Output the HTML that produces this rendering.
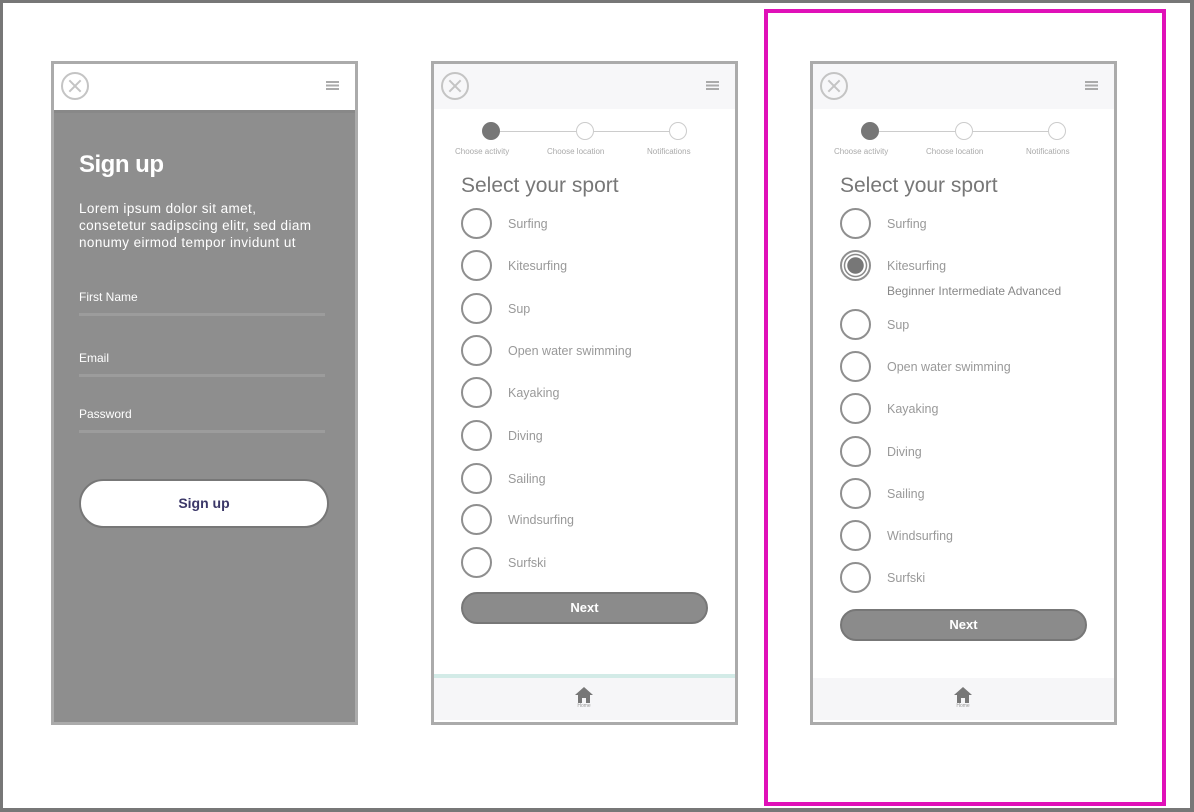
<!DOCTYPE html>
<html><head><meta charset="utf-8"><style>
*{margin:0;padding:0;box-sizing:border-box}
body{width:1194px;height:812px;position:relative;background:#fff;font-family:"Liberation Sans",sans-serif;overflow:hidden}
.a{position:absolute}
.outer{left:0;top:0;width:1194px;height:812px;border-style:solid;border-color:#777;border-width:3px 4px 4px 3px}
.mag{left:764px;top:9px;width:402px;height:797px;border:4px solid #e010b8}
.ph{top:61px;width:307px;height:664px;border:3px solid #ababab;background:#fff}
.hdr{left:0;top:0;width:301px;height:45px;background:#f7f7f9}
.x{left:7px;top:8px;width:28px;height:28px;border:2px solid #c4c4c4;border-radius:50%}
.x:before,.x:after{content:"";position:absolute;left:4px;top:11px;width:16px;height:2px;background:#c4c4c4;transform:rotate(45deg)}
.x:after{transform:rotate(-45deg)}
.hb{left:272px;top:17px;width:13px;height:9px;background:repeating-linear-gradient(#aaa 0 2px,transparent 2px 3.5px)}
.dot{width:18px;height:18px;border-radius:50%;border:1.5px solid #ccc;background:#fff}
.line{height:1px;background:#ccc}
.sl{font-size:8px;color:#aaa;top:83px}
.ttl{font-size:21px;color:#777;left:27px;top:110px}
.r{left:27px;width:31px;height:31px;border-radius:50%;border:2px solid #8f8f8f}
.lb{left:74px;font-size:12.5px;color:#999}
.nx{left:27px;width:247px;height:32px;border-radius:16px;background:#8b8b8b;border:2px solid #777;color:#fff;font-weight:bold;font-size:13px;text-align:center;line-height:28px}
.nav{left:0;width:301px;height:42px;background:#f6f6f8;top:614px}
.home{left:140px;top:8px}
</style></head><body>
<div class="a outer"></div>
<div class="a mag"></div>

<!-- phone 1 -->
<div class="a ph" style="left:51px;background:#8e8e8e">
  <div class="a hdr" style="background:#fff;height:46px"><div class="a x"></div><div class="a hb"></div></div>
  <div class="a" style="left:0;top:46px;width:301px;height:3px;background:#888"></div>
  <div class="a" style="left:25px;top:87px;font-size:24px;font-weight:bold;color:#fff;letter-spacing:-0.5px">Sign up</div>
  <div class="a" style="left:25px;top:136px;font-size:13.5px;letter-spacing:0.4px;line-height:17px;color:#fff;width:280px;white-space:nowrap">Lorem ipsum dolor sit amet,<br>consetetur sadipscing elitr, sed diam<br>nonumy eirmod tempor invidunt ut</div>
  <div class="a" style="left:25px;top:226px;font-size:12px;color:#fff">First Name</div>
  <div class="a" style="left:25px;top:249px;width:246px;height:3px;background:#9c9c9c"></div>
  <div class="a" style="left:25px;top:287px;font-size:12px;color:#fff">Email</div>
  <div class="a" style="left:25px;top:310px;width:246px;height:3px;background:#9c9c9c"></div>
  <div class="a" style="left:25px;top:343px;font-size:12px;color:#fff">Password</div>
  <div class="a" style="left:25px;top:366px;width:246px;height:3px;background:#9c9c9c"></div>
  <div class="a" style="left:25px;top:415px;width:250px;height:49px;border-radius:25px;background:#fff;border:2px solid #777;text-align:center;line-height:45px;font-size:14px;font-weight:bold;color:#3b3768">Sign up</div>
</div>

<!-- phone 2 -->
<div class="a ph" style="left:431px">
  <div class="a hdr"><div class="a x"></div><div class="a hb"></div></div>
  <div class="a line" style="left:58px;top:67px;width:186px"></div>
  <div class="a dot" style="left:48px;top:58px;background:#777;border-color:#777"></div>
  <div class="a dot" style="left:142px;top:58px"></div>
  <div class="a dot" style="left:235px;top:58px"></div>
  <div class="a sl" style="left:21px">Choose activity</div>
  <div class="a sl" style="left:113px">Choose location</div>
  <div class="a sl" style="left:213px">Notifications</div>
  <div class="a ttl">Select your sport</div>
  <div class="a r" style="top:144px"></div><div class="a lb" style="top:153px">Surfing</div>
  <div class="a r" style="top:186px"></div><div class="a lb" style="top:195px">Kitesurfing</div>
  <div class="a r" style="top:229px"></div><div class="a lb" style="top:238px">Sup</div>
  <div class="a r" style="top:271px"></div><div class="a lb" style="top:280px">Open water swimming</div>
  <div class="a r" style="top:313px"></div><div class="a lb" style="top:322px">Kayaking</div>
  <div class="a r" style="top:356px"></div><div class="a lb" style="top:365px">Diving</div>
  <div class="a r" style="top:399px"></div><div class="a lb" style="top:408px">Sailing</div>
  <div class="a r" style="top:440px"></div><div class="a lb" style="top:449px">Windsurfing</div>
  <div class="a r" style="top:483px"></div><div class="a lb" style="top:492px">Surfski</div>
  <div class="a nx" style="top:528px">Next</div>
  <div class="a" style="left:0;top:610px;width:301px;height:4px;background:#d3ebe7"></div>
  <div class="a nav"><svg class="a home" width="20" height="22" viewBox="0 0 20 22"><path d="M10 1L1 9h3v8h4v-5h4v5h4V9h3z" fill="#777"/><text x="10" y="21" font-size="5" fill="#999" text-anchor="middle" font-family="Liberation Sans">Home</text></svg></div>
</div>

<!-- phone 3 -->
<div class="a ph" style="left:810px">
  <div class="a hdr"><div class="a x"></div><div class="a hb"></div></div>
  <div class="a line" style="left:58px;top:67px;width:186px"></div>
  <div class="a dot" style="left:48px;top:58px;background:#777;border-color:#777"></div>
  <div class="a dot" style="left:142px;top:58px"></div>
  <div class="a dot" style="left:235px;top:58px"></div>
  <div class="a sl" style="left:21px">Choose activity</div>
  <div class="a sl" style="left:113px">Choose location</div>
  <div class="a sl" style="left:213px">Notifications</div>
  <div class="a ttl">Select your sport</div>
  <div class="a r" style="top:144px"></div><div class="a lb" style="top:153px">Surfing</div>
  <div class="a r" style="top:186px;background:radial-gradient(circle,#777 0 8px,#fff 8.5px 10px,#8a8a8a 10.5px 11.5px,#fff 12px)"></div><div class="a lb" style="top:195px">Kitesurfing</div>
  <div class="a lb" style="top:220px;font-size:12px;color:#888">Beginner Intermediate Advanced</div>
  <div class="a r" style="top:245px"></div><div class="a lb" style="top:254px">Sup</div>
  <div class="a r" style="top:287px"></div><div class="a lb" style="top:296px">Open water swimming</div>
  <div class="a r" style="top:329px"></div><div class="a lb" style="top:338px">Kayaking</div>
  <div class="a r" style="top:372px"></div><div class="a lb" style="top:381px">Diving</div>
  <div class="a r" style="top:414px"></div><div class="a lb" style="top:423px">Sailing</div>
  <div class="a r" style="top:456px"></div><div class="a lb" style="top:465px">Windsurfing</div>
  <div class="a r" style="top:498px"></div><div class="a lb" style="top:507px">Surfski</div>
  <div class="a nx" style="top:545px">Next</div>
  <div class="a nav"><svg class="a home" width="20" height="22" viewBox="0 0 20 22"><path d="M10 1L1 9h3v8h4v-5h4v5h4V9h3z" fill="#777"/><text x="10" y="21" font-size="5" fill="#999" text-anchor="middle" font-family="Liberation Sans">Home</text></svg></div>
</div>
</body></html>
